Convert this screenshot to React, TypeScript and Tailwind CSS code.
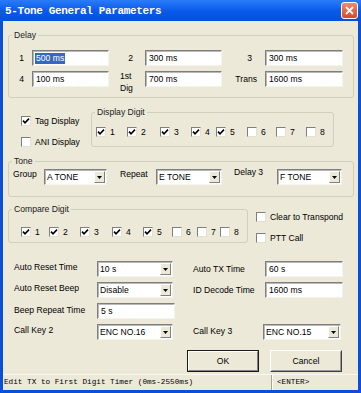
import React from "react";

const sunken =
  "border border-t-[#7f7f7f] border-l-[#7f7f7f] border-b-[#f4f3ee] border-r-[#f4f3ee] shadow-[inset_1px_1px_0_#b8b8b8]";

function TextBox({ value, w, selected }: { value: string; w: string; selected?: boolean }) {
  return (
    <div className={`h-[16px] bg-white flex items-center pl-[2px] ${sunken} ${w}`}>
      <span
        className={`leading-[11px] px-[1px] ${selected ? "bg-[#316AC5] text-white" : "text-black"}`}
      >
        {value}
      </span>
    </div>
  );
}

function Select({ value, w }: { value: string; w: string }) {
  return (
    <div className={`h-[16px] bg-white flex items-center ${sunken} ${w}`}>
      <span className="flex-1 pl-[2px] leading-[11px] whitespace-nowrap overflow-hidden">{value}</span>
      <span className="w-[11px] h-[12px] mr-[1px] bg-[#ECE9D8] border border-t-[#ffffff] border-l-[#ffffff] border-b-[#808080] border-r-[#808080] flex items-center justify-center">
        <svg width="5" height="3" viewBox="0 0 5 3">
          <path d="M0 0 H5 L2.5 3 Z" fill="#000" />
        </svg>
      </span>
    </div>
  );
}

function Check({ label, checked, cell }: { label: string; checked?: boolean; cell?: string }) {
  return (
    <div className={`flex items-center h-[10px] ${cell ?? ""}`}>
      <span
        className={`w-[10px] h-[10px] shrink-0 bg-white flex items-center justify-center border border-t-[#7f7f7f] border-l-[#7f7f7f] border-b-[#e4e1d4] border-r-[#e4e1d4]`}
      >
        {checked && (
          <svg width="8" height="8" viewBox="0 0 8 8">
            <path d="M1 3.6 L3 5.8 L7 1.6" stroke="#000" strokeWidth="1.6" fill="none" />
          </svg>
        )}
      </span>
      <span className="ml-[4px] leading-[10px] whitespace-nowrap">{label}</span>
    </div>
  );
}

function Group({
  title,
  className,
  children,
}: {
  title: string;
  className: string;
  children: React.ReactNode;
}) {
  return (
    <fieldset className={`border border-[#D0D0BF] rounded-[3px] ${className}`}>
      <legend className="ml-[3px] px-[2px] leading-[10px] text-[#1a1a1a]">{title}</legend>
      {children}
    </fieldset>
  );
}

export default function App() {
  return (
    <div className="w-[361px] h-[393px] bg-[#0A4FD8] flex flex-col overflow-hidden font-['Liberation_Sans',Arial,sans-serif] text-[8.6px] text-black">
      {/* Title bar */}
      <div className="h-[21px] shrink-0 flex items-center justify-between bg-gradient-to-b from-[#2A7CF8] via-[#0A5BEA] to-[#0550D8]">
        <span className="pl-[5px] text-white font-bold font-['Liberation_Mono',monospace] text-[11px] tracking-[-0.35px] leading-[12px]">
          5-Tone General Parameters
        </span>
        <div className="mr-[3px] w-[17px] h-[17px] rounded-[3px] border border-white bg-gradient-to-b from-[#EE8A6C] to-[#D8472A] flex items-center justify-center">
          <svg width="9" height="9" viewBox="0 0 9 9">
            <path d="M1 1 L8 8 M8 1 L1 8" stroke="#fff" strokeWidth="1.8" />
          </svg>
        </div>
      </div>

      {/* Body */}
      <div className="flex-1 mx-[3px] mb-[3px] bg-[#ECE9D8] flex flex-col">
        <div className="flex flex-col pl-[5px] pr-[4px]">
          {/* Delay */}
          <Group title="Delay" className="mt-[9px] pt-[10px] pb-[10px]">
            <div className="flex items-center h-[16px]">
              <span className="w-[23px] text-right pr-[8px]">1</span>
              <TextBox value="500 ms" w="w-[77px]" selected />
              <span className="w-[36px] text-right pr-[12px]">2</span>
              <TextBox value="300 ms" w="w-[77px]" />
              <span className="w-[43px] text-right pr-[13px]">3</span>
              <TextBox value="300 ms" w="w-[78px]" />
            </div>
            <div className="flex items-center h-[16px] mt-[5px]">
              <span className="w-[23px] text-right pr-[8px]">4</span>
              <TextBox value="100 ms" w="w-[77px]" />
              <span className="w-[36px] self-start pl-[11px] leading-[12px] mt-[-1px]">
                1st
                <br />
                Dig
              </span>
              <TextBox value="700 ms" w="w-[77px]" />
              <span className="w-[43px] text-right pr-[8px]">Trans</span>
              <TextBox value="1600 ms" w="w-[78px]" />
            </div>
          </Group>

          {/* Tag / Display Digit */}
          <div className="flex mt-[9px]">
            <div className="w-[83px] flex flex-col pl-[13px] pt-[9px] gap-[11px]">
              <Check label="Tag Display" checked />
              <Check label="ANI Display" />
            </div>
            <Group title="Display Digit" className="w-[243px] pt-[10px] pb-[9px]">
              <div className="flex pl-[4px]">
                <Check label="1" checked cell="w-[31px]" />
                <Check label="2" checked cell="w-[33px]" />
                <Check label="3" checked cell="w-[31px]" />
                <Check label="4" checked cell="w-[25px]" />
                <Check label="5" checked cell="w-[31px]" />
                <Check label="6" cell="w-[29px]" />
                <Check label="7" cell="w-[30px]" />
                <Check label="8" />
              </div>
            </Group>
          </div>

          {/* Tone */}
          <Group title="Tone" className="mt-[9px] pt-[3px] pb-[11px]">
            <div className="flex items-start h-[16px]">
              <span className="w-[35px] pl-[4px] leading-[10px]">Group</span>
              <Select value="A TONE" w="w-[63px]" />
              <span className="w-[49px] pl-[13px] leading-[10px]">Repeat</span>
              <Select value="E TONE" w="w-[66px]" />
              <span className="w-[55px] pl-[12px] leading-[10px] mt-[-2px]">Delay 3</span>
              <Select value="F TONE" w="w-[65px]" />
            </div>
          </Group>

          {/* Compare Digit */}
          <div className="flex mt-[7px]">
            <Group title="Compare Digit" className="w-[240px] pt-[13px] pb-[5px]">
              <div className="flex pl-[12px]">
                <Check label="1" checked cell="w-[28px]" />
                <Check label="2" checked cell="w-[31px]" />
                <Check label="3" checked cell="w-[32px]" />
                <Check label="4" checked cell="w-[31px]" />
                <Check label="5" checked cell="w-[29px]" />
                <Check label="6" cell="w-[25px]" />
                <Check label="7" cell="w-[23px]" />
                <Check label="8" />
              </div>
            </Group>
            <div className="flex flex-col pl-[8px] pt-[8px] gap-[11px]">
              <Check label="Clear to Transpond" />
              <Check label="PTT Call" />
            </div>
          </div>

          {/* Fields */}
          <div className="flex flex-col gap-[5px] mt-[18px]">
            <div className="flex items-center h-[16px]">
              <span className="w-[89px] pl-[6px] mt-[-3px]">Auto Reset Time</span>
              <Select value="10 s" w="w-[76px]" />
              <span className="w-[20px]" />
              <span className="w-[72px]">Auto TX Time</span>
              <TextBox value="60 s" w="w-[78px]" />
            </div>
            <div className="flex items-center h-[16px]">
              <span className="w-[89px] pl-[6px] mt-[-3px]">Auto Reset Beep</span>
              <Select value="Disable" w="w-[76px]" />
              <span className="w-[20px]" />
              <span className="w-[72px]">ID Decode Time</span>
              <TextBox value="1600 ms" w="w-[78px]" />
            </div>
            <div className="flex items-center h-[16px]">
              <span className="w-[89px] pl-[6px] mt-[-2px]">Beep Repeat Time</span>
              <TextBox value="5 s" w="w-[78px]" />
            </div>
            <div className="flex items-center h-[16px]">
              <span className="w-[89px] pl-[6px] mt-[-4px]">Call Key 2</span>
              <Select value="ENC NO.16" w="w-[76px]" />
              <span className="w-[20px]" />
              <span className="w-[70px] mt-[-2px]">Call Key 3</span>
              <Select value="ENC NO.15" w="w-[78px]" />
            </div>
          </div>

          {/* Buttons */}
          <div className="flex justify-end gap-[11px] pr-[12px] mt-[10px]">
            <div className="w-[72px] h-[22px] border border-[#1a1a1a] flex">
              <div className="flex-1 border border-t-[#ffffff] border-l-[#ffffff] border-b-[#808080] border-r-[#808080] bg-[#ECE9D8] flex items-center justify-center">
                OK
              </div>
            </div>
            <div className="w-[72px] h-[22px] border border-t-[#ffffff] border-l-[#ffffff] border-b-[#404040] border-r-[#404040] flex">
              <div className="flex-1 border border-t-[#ECE9D8] border-l-[#ECE9D8] border-b-[#9a9a9a] border-r-[#9a9a9a] bg-[#ECE9D8] flex items-center justify-center">
                Cancel
              </div>
            </div>
          </div>
        </div>

        {/* Status bar */}
        <div className="mt-auto h-[16px] flex font-['Liberation_Mono',monospace] text-[7.7px] border-t border-[#F8F7F2]">
          <div className="w-[269px] flex items-center pl-[1px] border-r border-[#A8A596] whitespace-nowrap overflow-hidden">
            Edit TX to First Digit Timer (0ms-2550ms)
          </div>
          <div className="flex-1 flex items-center pl-[4px] border-l border-[#ffffff]">&lt;ENTER&gt;</div>
        </div>
      </div>
    </div>
  );
}
